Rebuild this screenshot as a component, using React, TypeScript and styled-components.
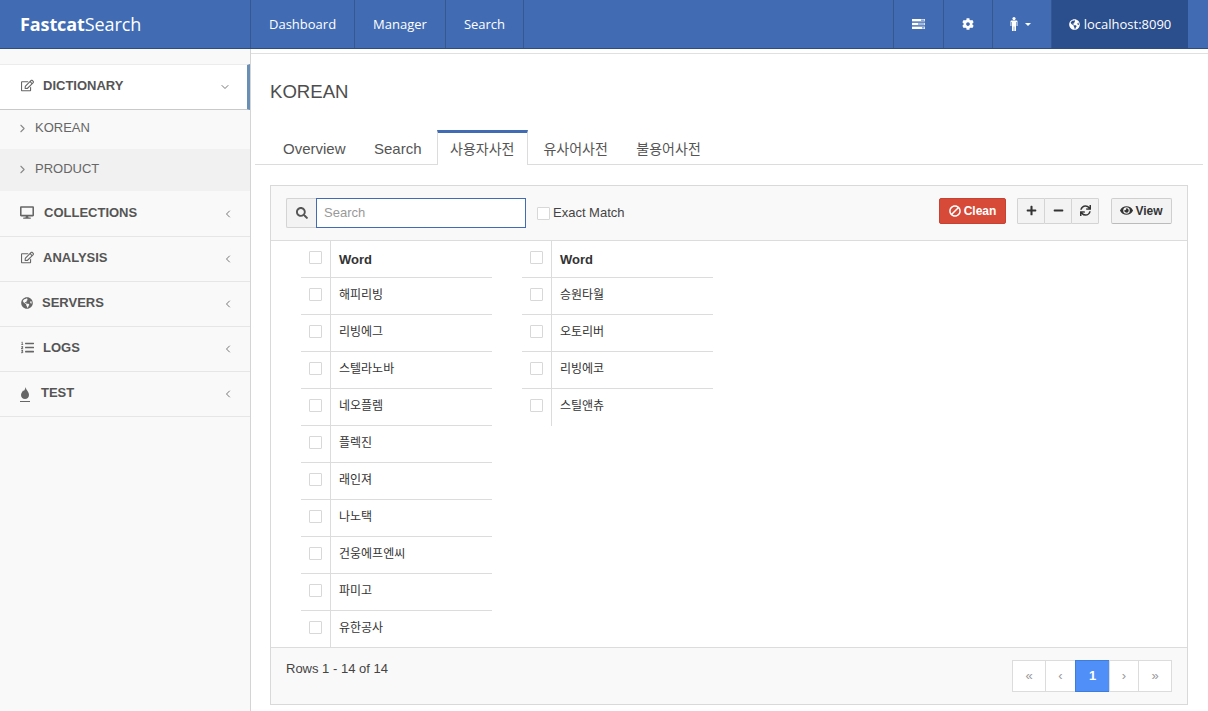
import React from 'react';
import styled, { createGlobalStyle } from 'styled-components';
import {
  FaRegEdit, FaDesktop, FaGlobeAmericas, FaListOl, FaCog, FaSearch, FaBan, FaPlus, FaMinus, FaSync, FaEye,
} from 'react-icons/fa';
import { FiChevronDown, FiChevronLeft, FiChevronRight } from 'react-icons/fi';

const Global = createGlobalStyle`
  html, body { margin: 0; padding: 0; background: #fff; }
  body { width: 1208px; height: 711px; overflow: hidden; font-family: "Liberation Sans", "Noto Sans CJK KR", sans-serif; color: #555; }
  * { box-sizing: border-box; }
`;

const Page = styled.div`display: flex; flex-direction: column; width: 1208px; height: 711px; overflow: hidden;`;

const Header = styled.header`
  display: flex; height: 49px; flex: none; background: #416cb4; border-bottom: 1px solid #2e4c7c; color: #fff;
`;
const Brand = styled.div`
  width: 251px; flex: none; padding: 0 0 0 20px; font: 400 18px/49px "Open Sans", sans-serif;
  letter-spacing: -0.1px; border-right: 1px solid #34588f; b { font-weight: 700; }
`;
const NavLink = styled.div`
  padding: 0 18px; font: 400 13px/48px "Open Sans", sans-serif; border-right: 1px solid #34588f;
`;
const Spacer = styled.div`flex: 1; border-right: 1px solid #34588f;`;
const IconCell = styled.div<{ $w: number }>`
  width: ${p => p.$w}px; display: flex; align-items: center; justify-content: center; gap: 7px; border-right: 1px solid #34588f;
`;
const Caret = styled.span`width: 0; height: 0; border: 3px solid transparent; border-top-color: #fff; border-bottom: 0; margin: 1px 4px 0 0;`;
const HostCell = styled.div`
  width: 136px; background: #2b4e8c; display: flex; align-items: center; justify-content: center; gap: 4px;
  font: 400 13px/1 "Open Sans", sans-serif;
`;
const HeaderEnd = styled.div`width: 20px; flex: none;`;

const Body = styled.div`display: flex; flex: 1; min-height: 0;`;
const Sidebar = styled.aside`
  width: 251px; flex: none; background: #f9f9f9; border-right: 1px solid #d4d4d4; padding-top: 15px;
`;
const OpenItem = styled.div`
  height: 46px; display: flex; align-items: center; background: #fff; padding: 0 20px 4px;
  border-top: 1px solid #ececec; border-bottom: 1px solid #c9c9c9; border-right: 3px solid #6a8fb5;
  font-size: 13px; font-weight: 700; color: #555;
`;
const SubItem = styled.div<{ $alt?: boolean }>`
  height: ${p => (p.$alt ? 43 : 39)}px; display: flex; align-items: center; padding: ${p => (p.$alt ? '0 0 3px 16px' : '0 0 4px 16px')};
  font-size: 13px; color: #666; background: ${p => (p.$alt ? '#f1f1f1' : '#f9f9f9')};
  border-bottom: ${p => (p.$alt ? '1px solid #f9f9f9' : '0')};
`;
const SubChevron = styled(FiChevronRight)`margin-top: 2px; color: #888;`;
const SubLabel = styled.span`margin-left: 6px;`;
const MenuItem = styled.div`
  height: 45px; display: flex; align-items: center; padding: 0 20px 3px; border-bottom: 1px solid #e6e6e6;
  font-size: 13px; font-weight: 700; color: #555;
`;
const MenuLabel = styled.span<{ $gap: number }>`margin-left: ${p => p.$gap}px; flex: 1;`;
const IconBox = styled.span<{ $underline?: boolean }>`
  display: inline-flex; color: #666; width: ${p => (p.$underline ? 10 : 14)}px; justify-content: center;
  ${p => p.$underline && 'border-bottom: 1px solid #666; padding-bottom: 2px; margin-top: 3px; margin-right: 4px;'}
`;
const Chevron = styled.span`display: inline-flex; color: #777; margin: 3px -4px 0 0;`;

const Main = styled.main`flex: 1; min-width: 0; display: flex; flex-direction: column; padding-left: 4px;`;
const TopRule = styled.div`height: 5px; flex: none; border-bottom: 1px solid #e0e0e0; margin-left: -4px;`;
const Title = styled.h1`margin: 0; padding: 26px 0 0 15px; height: 76px; flex: none; font-size: 18.6px; font-weight: 400; line-height: 24px; color: #4d4d4d;`;
const Tabs = styled.div`display: flex; height: 35px; flex: none; margin-right: 5px; border-bottom: 1px solid #dcdcdc; padding-left: 15px;`;
const Tab = styled.div<{ $active?: boolean; $ko?: boolean }>`
  height: 35px; padding: ${p => (p.$active ? '6px 13px 0 12px' : '9px 13px 0')}; font-size: ${p => (p.$ko ? 14 : 15)}px; color: #555; line-height: 20px; margin-right: 2.5px;
  ${p => p.$active && 'background:#fff;border:1px solid #dcdcdc;border-top:3px solid #416cb4;border-bottom:0;margin-right:2px;'}
`;
const Panel = styled.section`
  margin: 20px 20px 0 15px; height: 520px; flex: none; border: 1px solid #d9d9d9; display: flex; flex-direction: column; background: #fff;
`;
const Toolbar = styled.div`
  height: 55px; flex: none; display: flex; align-items: center; background: #f9f9f9; border-bottom: 1px solid #dcdcdc; padding: 0 15px 1px;
`;
const AddOn = styled.span`
  width: 30px; height: 30px; display: flex; align-items: center; justify-content: center; background: #f3f3f3; border: 1px solid #d4d4d4; border-right: 0; border-radius: 2px 0 0 2px; color: #555;
`;
const SearchInput = styled.input`
  width: 210px; height: 30px; border: 1px solid #416cb4; padding: 0 7px; font: 13px "Liberation Sans", sans-serif; color: #555; outline: 0; background: #fff;
  &::placeholder { color: #999; opacity: 1; }
`;
const CheckBox = styled.span<{ $mr?: number; $mt?: number }>`
  display: block; width: 13px; height: 13px; flex: none; background: #fff; border: 1px solid #d8d8d8; border-radius: 1px;
  margin: ${p => p.$mt ?? 0}px ${p => p.$mr ?? 0}px 0 0;
`;
const Exact = styled.label`display: flex; align-items: center; margin-left: 11px; font-size: 13px; color: #444;`;
const Grow = styled.div`flex: 1;`;
const RightTools = styled.div`display: flex; margin-bottom: 4px;`;
const Danger = styled.button`
  display: flex; align-items: center; gap: 3px; height: 26px; width: 67px; justify-content: center; padding: 0; background: #d84a38; border: 1px solid #c64232; border-radius: 2px; color: #fff;
  font: 700 12px "Liberation Sans", sans-serif;
`;
const BanIcon = styled(FaBan)`transform: scaleX(-1);`;
const BtnGroup = styled.div`display: flex; margin-left: 11px;`;
const GroupBtn = styled.button`
  width: 28px; height: 26px; padding: 0; display: flex; align-items: center; justify-content: center; background: #f3f3f3; color: #333;
  border: 1px solid #d4d4d4; margin-left: -1px; border-radius: 1px; &:first-child { margin-left: 0; }
`;
const ViewBtn = styled.button`
  display: flex; align-items: center; justify-content: center; gap: 2px; width: 61px; height: 26px; margin-left: 12px; padding: 0; background: #f3f3f3; border: 1px solid #cfcfcf; border-bottom-color: #bbb; border-radius: 2px; color: #333;
  font: 700 12px "Liberation Sans", sans-serif;
`;
const TableArea = styled.div`flex: 1; min-height: 0; display: flex; padding-left: 30px; gap: 30px; overflow: hidden;`;
const WordTable = styled.div`width: 191px; flex: none; display: flex; flex-direction: column;`;
const Row = styled.div<{ $last?: boolean }>`
  height: 37px; flex: none; display: flex; font-size: 12px; color: #333;
  border-bottom: 1px solid ${p => (p.$last ? 'transparent' : '#dcdcdc')};
`;
const CheckCell = styled.div`width: 29px; flex: none; display: flex; align-items: center; justify-content: center; padding-bottom: 3px;`;
const WordCell = styled.div<{ $head?: boolean }>`
  flex: 1; display: flex; align-items: center; padding: 0 0 ${p => (p.$head ? 0 : 7)}px 8px; border-left: 1px solid #dcdcdc; font-weight: ${p => (p.$head ? 700 : 400)};
  font-size: ${p => (p.$head ? 13 : 12)}px;
  margin-bottom: ${p => (p.$head ? 0 : -1)}px;
`;
const Footer = styled.div`
  height: 57px; flex: none; display: flex; justify-content: space-between; background: #f9f9f9; border-top: 1px solid #dcdcdc; padding: 12px 15px 0;
  font-size: 13px; color: #444; line-height: 16px;
`;
const RowsText = styled.span`padding-top: 1px;`;
const Pager = styled.div`display: flex; height: 32px;`;
const PageCell = styled.span<{ $active?: boolean; $w: number }>`
  width: ${p => p.$w}px; margin-left: -1px; display: flex; align-items: center; justify-content: center;
  border: 1px solid ${p => (p.$active ? '#3f7ed8' : '#dcdcdc')}; background: ${p => (p.$active ? '#4f8ff7' : '#fff')};
  color: ${p => (p.$active ? '#fff' : '#999')}; font-size: 13px; font-weight: ${p => (p.$active ? 700 : 400)};
`;

const left = ['해피리빙', '리빙에그', '스텔라노바', '네오플렘', '플렉진', '래인져', '나노택', '건웅에프엔씨', '파미고', '유한공사'];
const right = ['승원타월', '오토리버', '리빙에코', '스틸앤츄'];

const Words = ({ items }: { items: string[] }) => (
  <WordTable>
    <Row>
      <CheckCell><CheckBox /></CheckCell>
      <WordCell $head>Word</WordCell>
    </Row>
    {items.map((w, i) => (
      <Row key={w} $last={i === items.length - 1}>
        <CheckCell><CheckBox /></CheckCell>
        <WordCell>{w}</WordCell>
      </Row>
    ))}
  </WordTable>
);

const TasksIcon = () => (
  <svg width="13" height="10" viewBox="0 0 13 10" aria-hidden="true">
    <rect x="0" y="0" width="13" height="2.4" fill="#fff" />
    <rect x="9" y="0.4" width="3.4" height="1.6" fill="#8fa6cf" />
    <rect x="0" y="3.8" width="13" height="2.4" fill="#fff" />
    <rect x="6" y="4.2" width="6.4" height="1.6" fill="#8fa6cf" />
    <rect x="0" y="7.6" width="13" height="2.4" fill="#fff" />
    <rect x="10" y="8" width="2.4" height="1.6" fill="#8fa6cf" />
  </svg>
);

const MaleIcon = () => (
  <svg width="8" height="14" viewBox="0 0 8 14" fill="#fff" aria-hidden="true">
    <circle cx="4" cy="1.6" r="1.6" />
    <path d="M1.5 3.6h5a1 1 0 0 1 1 1V9H6.6V5H6v9H4.3V9.5H3.7V14H2V5h-.6v4H.5V4.6a1 1 0 0 1 1-1z" />
  </svg>
);

const FlameIcon = () => (
  <svg width="10" height="12" viewBox="0 0 10 12" fill="currentColor" aria-hidden="true">
    <path d="M5.6 0C5.8 3 9 4.6 9 8c0 2.4-1.9 4-4 4s-4-1.6-4-4c0-2 1.5-3 2-4.5C4.2 4.4 5.2 2.2 5.6 0z" />
  </svg>
);

const menu = [
  { label: 'COLLECTIONS', icon: <IconBox><FaDesktop size={15} /></IconBox>, gap: 10 },
  { label: 'ANALYSIS', icon: <IconBox><FaRegEdit size={13} /></IconBox>, gap: 9 },
  { label: 'SERVERS', icon: <IconBox><FaGlobeAmericas size={12} /></IconBox>, gap: 8 },
  { label: 'LOGS', icon: <IconBox><FaListOl size={13} /></IconBox>, gap: 9 },
  { label: 'TEST', icon: <IconBox $underline><FlameIcon /></IconBox>, gap: 7 },
];

export default function App() {
  return (
    <Page>
      <Global />
      <Header>
        <Brand><b>Fastcat</b>Search</Brand>
        <NavLink>Dashboard</NavLink>
        <NavLink>Manager</NavLink>
        <NavLink>Search</NavLink>
        <Spacer />
        <IconCell $w={50}><TasksIcon /></IconCell>
        <IconCell $w={49}><FaCog size={12} /></IconCell>
        <IconCell $w={59}><MaleIcon /><Caret /></IconCell>
        <HostCell><FaGlobeAmericas size={11} />localhost:8090</HostCell>
        <HeaderEnd />
      </Header>
      <Body>
        <Sidebar>
          <OpenItem>
            <IconBox><FaRegEdit size={13} /></IconBox>
            <MenuLabel $gap={9}>DICTIONARY</MenuLabel>
            <Chevron><FiChevronDown size={12} /></Chevron>
          </OpenItem>
          <SubItem><SubChevron size={13} /><SubLabel>KOREAN</SubLabel></SubItem>
          <SubItem $alt><SubChevron size={13} /><SubLabel>PRODUCT</SubLabel></SubItem>
          {menu.map(m => (
            <MenuItem key={m.label}>
              {m.icon}
              <MenuLabel $gap={m.gap}>{m.label}</MenuLabel>
              <Chevron><FiChevronLeft size={12} /></Chevron>
            </MenuItem>
          ))}
        </Sidebar>
        <Main>
          <TopRule />
          <Title>KOREAN</Title>
          <Tabs>
            <Tab>Overview</Tab>
            <Tab>Search</Tab>
            <Tab $active $ko>사용자사전</Tab>
            <Tab $ko>유사어사전</Tab>
            <Tab $ko>불용어사전</Tab>
          </Tabs>
          <Panel>
            <Toolbar>
              <AddOn><FaSearch size={12} /></AddOn>
              <SearchInput placeholder="Search" readOnly />
              <Exact><CheckBox $mr={3} $mt={1} />Exact Match</Exact>
              <Grow />
              <RightTools>
                <Danger><BanIcon size={12} />Clean</Danger>
                <BtnGroup>
                  <GroupBtn><FaPlus size={11} /></GroupBtn>
                  <GroupBtn><FaMinus size={11} /></GroupBtn>
                  <GroupBtn><FaSync size={11} /></GroupBtn>
                </BtnGroup>
                <ViewBtn><FaEye size={13} />View</ViewBtn>
              </RightTools>
            </Toolbar>
            <TableArea>
              <Words items={left} />
              <Words items={right} />
            </TableArea>
            <Footer>
              <RowsText>Rows 1 - 14 of 14</RowsText>
              <Pager>
                <PageCell $w={34}>«</PageCell>
                <PageCell $w={31}>‹</PageCell>
                <PageCell $w={35} $active>1</PageCell>
                <PageCell $w={30}>›</PageCell>
                <PageCell $w={34}>»</PageCell>
              </Pager>
            </Footer>
          </Panel>
        </Main>
      </Body>
    </Page>
  );
}
